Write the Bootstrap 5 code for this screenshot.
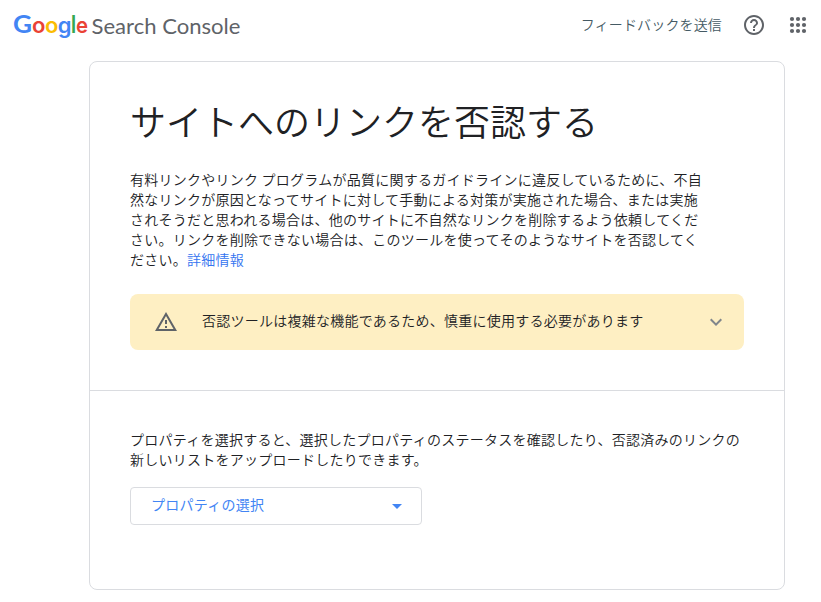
<!DOCTYPE html>
<html lang="ja">
<head>
<meta charset="utf-8">
<meta name="viewport" content="width=device-width, initial-scale=1">
<title>サイトへのリンクを否認する</title>
<link href="https://cdn.jsdelivr.net/npm/bootstrap@5.3.0/dist/css/bootstrap.min.css" rel="stylesheet">
<style>
body{font-family:"Noto Sans CJK JP",sans-serif;font-weight:350;font-size:14px;line-height:20px;letter-spacing:.25px;color:#202124;background:#fff;overflow:hidden}
.topbar{height:50px;padding:0 14px 0 10px}
.brand{height:50px;letter-spacing:0;white-space:nowrap}
.brand svg{display:block;overflow:visible}
.feedback{color:#455a64;letter-spacing:.15px;padding-bottom:3px}
.panel{width:696px;height:529px;margin:11px auto 0 89px;border:1px solid #dadce0;border-radius:8px}
.intro{height:329px;padding:34px 40px 0;border-bottom:1px solid #dadce0}
.page-title{font-size:36px;line-height:48px;font-weight:350;letter-spacing:0;margin:0 0 25px;white-space:nowrap}
.copy{white-space:nowrap;margin:0}
.copy a{color:#3474f0}
.notice{height:56px;margin-top:25px;padding:0 16px 0 24px;background:#feefc3;border-radius:8px}
.notice span{padding-bottom:4px}
.chooser{padding:38px 40px 0}
.select-btn{width:292px;height:38px;margin-top:18px;padding:0 12px 0 20px;border:1px solid #dadce0;border-radius:4px;background:#fff;color:#4285f4;font-size:14px;line-height:20px;letter-spacing:.25px}
.select-btn span{padding-bottom:4px}
.apps{margin-left:19px}
</style>
</head>
<body>
<header class="topbar d-flex align-items-center justify-content-between">
  <a class="brand text-decoration-none" href="#" aria-label="Google Search Console">
    <svg width="250" height="50" font-family="Lato, sans-serif">
      <g font-family="Inter, sans-serif" font-size="22" font-weight="600">
        <text x="3" y="33" fill="#4285f4" font-family="Lato, sans-serif" font-weight="700" font-size="25" textLength="19" lengthAdjust="spacingAndGlyphs">G</text>
        <text x="22" y="33" fill="#ea4335">o</text>
        <text x="35" y="33" fill="#fbbc04">o</text>
        <text x="47.800" y="33" fill="#4285f4">g</text>
        <text x="60.500" y="33" fill="#34a853" font-size="24" font-weight="500">l</text>
        <text x="66" y="33" fill="#ea4335" textLength="12" lengthAdjust="spacingAndGlyphs">e</text>
      </g>
      <text x="81.500" y="34" fill="#5f6368" font-size="22" font-weight="400" textLength="149" lengthAdjust="spacingAndGlyphs">Search Console</text>
    </svg>
  </a>
  <div class="d-flex align-items-center">
    <span class="feedback">フィードバックを送信</span>
    <svg class="ms-3" width="32" height="24" viewBox="-4 0 32 24" fill="#5f6368"><path d="M11 18h2v-2h-2v2zm1-16C6.480 2 2 6.480 2 12s4.480 10 10 10 10-4.480 10-10S17.520 2 12 2zm0 18c-4.410 0-8-3.590-8-8s3.590-8 8-8 8 3.590 8 8-3.590 8-8 8zm0-14c-2.210 0-4 1.790-4 4h2c0-1.100.9-2 2-2s2 .9 2 2c0 2-3 1.750-3 5h2c0-2.250 3-2.500 3-5 0-2.210-1.790-4-4-4z"/></svg>
    <svg class="apps" width="18" height="18" viewBox="0 0 18 18" fill="#5f6368"><g id="dots"><circle cx="3" cy="3" r="2.100"/><circle cx="9" cy="3" r="2.100"/><circle cx="15" cy="3" r="2.100"/></g><use href="#dots" y="6"/><use href="#dots" y="12"/></svg>
  </div>
</header>
<main class="panel">
  <section class="intro">
    <h1 class="page-title">サイトへのリンクを否認する</h1>
    <p class="copy">有料リンクやリンク プログラムが品質に関するガイドラインに違反しているために、不自<br>然なリンクが原因となってサイトに対して手動による対策が実施された場合、または実施<br>されそうだと思われる場合は、他のサイトに不自然なリンクを削除するよう依頼してくだ<br>さい。リンクを削除できない場合は、このツールを使ってそのようなサイトを否認してく<br>ださい。<a class="text-decoration-none" href="#">詳細情報</a></p>
    <div class="notice d-flex align-items-center">
      <svg width="24" height="24" viewBox="0 0 24 24" fill="#5f6368"><path d="M12 5.990 19.530 19H4.470L12 5.990M12 2 1 21h22L12 2zm1 14h-2v2h2v-2zm0-6h-2v4h2v-4z"/></svg>
      <span class="flex-grow-1 ms-4">否認ツールは複雑な機能であるため、慎重に使用する必要があります</span>
      <svg width="24" height="24" viewBox="0 0 24 24" fill="#80868b"><path d="M7.410 8.590 12 13.170l4.590-4.580L18 10l-6 6-6-6z"/></svg>
    </div>
  </section>
  <section class="chooser">
    <p class="copy">プロパティを選択すると、選択したプロパティのステータスを確認したり、否認済みのリンクの<br>新しいリストをアップロードしたりできます。</p>
    <button class="select-btn d-flex align-items-center justify-content-between" type="button"><span>プロパティの選択</span><svg width="24" height="24" viewBox="0 0 24 24" fill="#4285f4"><path d="m7 10 5 5 5-5z"/></svg></button>
  </section>
</main>
<script src="https://cdn.jsdelivr.net/npm/bootstrap@5.3.0/dist/js/bootstrap.bundle.min.js"></script>
</body>
</html>
